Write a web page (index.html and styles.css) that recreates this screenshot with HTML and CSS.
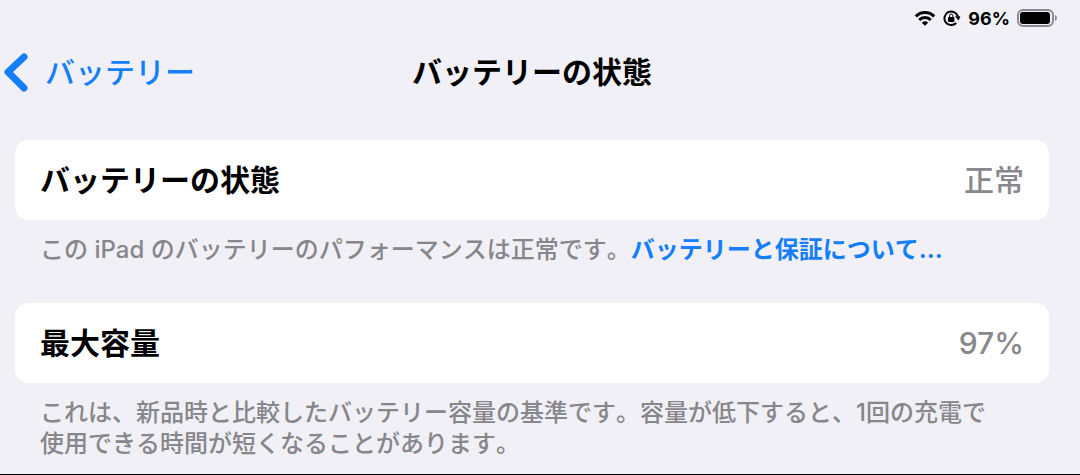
FILE: index.html
```html
<!DOCTYPE html>
<html lang="ja">
<head>
  <meta charset="UTF-8">
  <meta name="viewport" content="width=device-width, initial-scale=1">
  <title>バッテリーの状態</title>
  <link rel="stylesheet" href="styles.css">
</head>
<body>

  <div class="status-bar">
    <svg class="wifi" viewBox="0 0 22 16" aria-hidden="true">
      <path d="M1.8 6.4 A13 13 0 0 1 20.2 6.4" />
      <path d="M5.2 10 A8.2 8.2 0 0 1 16.8 10" />
      <path class="wifi-dot" d="M11 15.8 L7.9 12.7 A4.6 4.6 0 0 1 14.1 12.7 Z" />
    </svg>
    <svg class="rotation-lock" viewBox="0 0 18 18" aria-hidden="true">
      <path d="M13.2 14 A6.8 6.8 0 1 1 14.8 7.4" />
      <path class="solid" d="M12 7.2 H17.4 L15.6 11.4 Z" />
      <rect class="solid" x="5" y="8" width="6.4" height="5" rx="1" />
      <path class="shackle" d="M6.5 8.5 V6.8 A1.7 1.7 0 0 1 9.9 6.8 V8.5" />
    </svg>
    <span>96%</span>
    <svg class="battery" viewBox="0 0 40 18" aria-hidden="true">
      <rect class="battery-case" x="1" y="1" width="35" height="16" rx="5" />
      <rect x="3" y="3" width="30" height="12" rx="3" />
      <path class="battery-tip" d="M38 6 Q40 7 40 9 Q40 11 38 12 Z" />
    </svg>
  </div>

  <header class="nav-bar">
    <a class="back" href="#">
      <svg viewBox="0 0 24 40" aria-hidden="true">
        <path d="M20 5 L4 20 L20 36" />
      </svg>
      バッテリー
    </a>
    <h1>バッテリーの状態</h1>
  </header>

  <main>
    <section>
      <div class="card">
        <h2>バッテリーの状態</h2>
        <span class="value">正常</span>
      </div>
      <p>この iPad のバッテリーのパフォーマンスは正常です。<a href="#">バッテリーと保証について...</a></p>
    </section>

    <section>
      <div class="card">
        <h2>最大容量</h2>
        <span class="value">97%</span>
      </div>
      <p>これは、新品時と比較したバッテリー容量の基準です。容量が低下すると、1回の充電で使用できる時間が短くなることがあります。</p>
    </section>
  </main>

</body>
</html>
```
FILE: styles.css
```css
* {
  box-sizing: border-box;
}

body {
  margin: 0;
  min-height: 100vh;
  background: #f1f0f6;
  border-bottom: 1px solid #000;
  color: #000;
  font-family: Inter, "Noto Sans CJK JP", sans-serif;
}

a {
  color: #147efb;
  text-decoration: none;
}

.status-bar {
  display: flex;
  justify-content: flex-end;
  align-items: center;
  gap: 7px;
  height: 36px;
  padding-right: 23px;
  font-size: 18px;
  font-weight: 700;
}

.wifi {
  width: 22px;
  height: 16px;
  fill: none;
  stroke: #000;
  stroke-width: 3;
}

.wifi-dot {
  fill: #000;
  stroke: none;
}

.rotation-lock {
  width: 18px;
  height: 18px;
  fill: none;
  stroke: #000;
  stroke-width: 2;
}

.rotation-lock .solid {
  fill: #000;
  stroke: none;
}

.rotation-lock .shackle {
  stroke-width: 1;
}

.battery {
  width: 40px;
  height: 18px;
}

.battery-case {
  fill: none;
  stroke: #8b8a90;
  stroke-width: 2;
}

.battery-tip {
  fill: #8b8a90;
}

.nav-bar {
  display: grid;
  grid-template-columns: 1fr auto 1fr;
  align-items: center;
  height: 72px;
  padding: 0 20px 0 4px;
}

.back {
  display: flex;
  align-items: center;
  gap: 17px;
  font-size: 30px;
  font-weight: 500;
  line-height: 40px;
}

.back svg {
  width: 24px;
  height: 40px;
  fill: none;
  stroke: #147efb;
  stroke-width: 7;
  stroke-linecap: round;
  stroke-linejoin: round;
}

h1,
h2 {
  margin: 0;
  font-size: 30px;
  font-weight: 700;
  line-height: 40px;
}

main {
  padding: 32px 31px 15px 15px;
}

.card {
  display: flex;
  justify-content: space-between;
  align-items: center;
  padding: 20px 25px;
  background: #fff;
  border-radius: 14px;
}

.value {
  color: #88888d;
  font-size: 30px;
  font-weight: 500;
  line-height: 40px;
}

p {
  margin: 14px 40px 38px 25px;
  color: #86868b;
  font-size: 24px;
  font-weight: 500;
  line-height: 31px;
  font-kerning: none;
}

p a {
  font-weight: 700;
}

section:last-child p {
  margin-bottom: 0;
}
```
